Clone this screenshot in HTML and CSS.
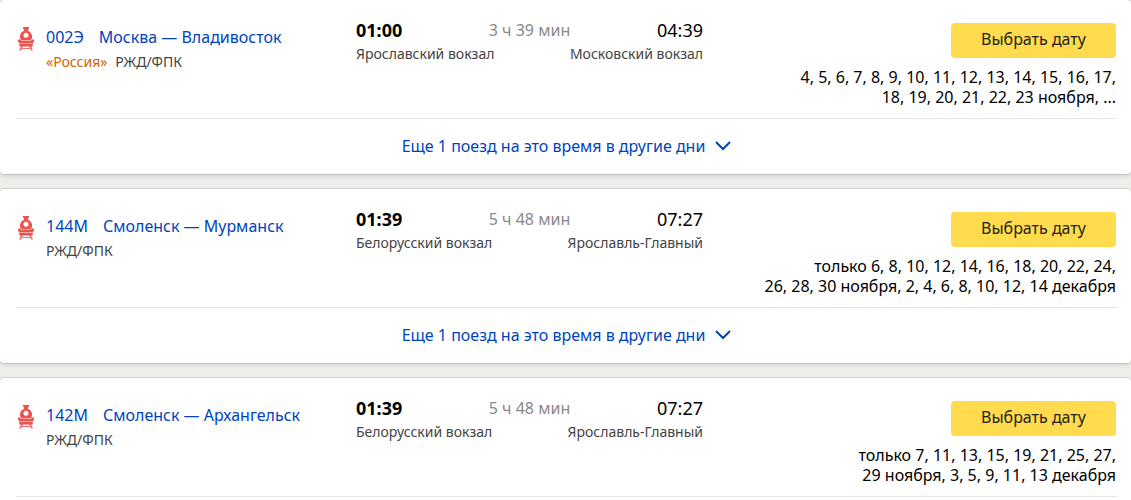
FILE: index.html
```
<!DOCTYPE html>
<html lang="ru">
<head>
	<meta charset="UTF-8">
	<meta name="viewport" content="width=device-width, initial-scale=1.0">
	<title>Расписание поездов</title>
	<link rel="stylesheet" href="styles.css">
</head>
<body>
	<svg class="sprite" width="0" height="0" aria-hidden="true">
		<symbol id="train" viewBox="0 0 16 24">
			<path d="M5 0h6v1.500l-1 1V5H6V2.500l-1-1z"/>
			<path fill-rule="evenodd" d="M8 3.500a6 6 0 0 1 4.500 10h-9A6 6 0 0 1 8 3.500zM8 5.800a2.500 2.500 0 1 0 0 5a2.500 2.500 0 0 0 0-5z"/>
			<path d="M0 12.500h2l1.500 1.500h9l1.500-1.500h2v2l-1 1.500H1l-1-1.500z"/>
			<path d="M1 16.500h14l-.5 3h-13z"/>
			<path d="M3 19h2.500L4 21h8l-1.500-2H13l2 4.500h-2L12.200 22H3.800L3 23.500H1z" opacity=".8"/>
		</symbol>
		<symbol id="arrow" viewBox="0 0 16 10">
			<path d="M1 1l7 7 7-7" fill="none" stroke="currentColor" stroke-width="2"/>
		</symbol>
	</svg>
	<main class="segments">
		<article class="segment">
			<div class="segment-main">
				<div class="train">
					<svg class="train-icon" aria-hidden="true"><use href="#train"/></svg>
					<div class="train-info">
						<a class="train-title" href="#"><span class="number">002Э</span>Москва — Владивосток</a>
						<div class="train-company"><span class="brand">«Россия»</span>РЖД/ФПК</div>
					</div>
				</div>
				<div class="route">
					<div class="point">
						<time class="time departure">01:00</time>
						<div class="station">Ярославский вокзал</div>
					</div>
					<div class="duration">3 ч 39 мин</div>
					<div class="point arrival">
						<time class="time">04:39</time>
						<div class="station">Московский вокзал</div>
					</div>
				</div>
				<div class="days">
					<button class="choose" type="button">Выбрать дату</button>
					<div class="dates">4, 5, 6, 7, 8, 9, 10, 11, 12, 13, 14, 15, 16, 17,<br>18, 19, 20, 21, 22, 23 ноября, ...</div>
				</div>
			</div>
			<button class="more" type="button">Еще 1 поезд на это время в другие дни <svg class="arrow" aria-hidden="true"><use href="#arrow"/></svg></button>
		</article>
		<article class="segment">
			<div class="segment-main">
				<div class="train">
					<svg class="train-icon" aria-hidden="true"><use href="#train"/></svg>
					<div class="train-info">
						<a class="train-title" href="#"><span class="number">144М</span>Смоленск — Мурманск</a>
						<div class="train-company">РЖД/ФПК</div>
					</div>
				</div>
				<div class="route">
					<div class="point">
						<time class="time departure">01:39</time>
						<div class="station">Белорусский вокзал</div>
					</div>
					<div class="duration">5 ч 48 мин</div>
					<div class="point arrival">
						<time class="time">07:27</time>
						<div class="station">Ярославль-Главный</div>
					</div>
				</div>
				<div class="days">
					<button class="choose" type="button">Выбрать дату</button>
					<div class="dates">только 6, 8, 10, 12, 14, 16, 18, 20, 22, 24,<br>26, 28, 30 ноября, 2, 4, 6, 8, 10, 12, 14 декабря</div>
				</div>
			</div>
			<button class="more" type="button">Еще 1 поезд на это время в другие дни <svg class="arrow" aria-hidden="true"><use href="#arrow"/></svg></button>
		</article>
		<article class="segment">
			<div class="segment-main">
				<div class="train">
					<svg class="train-icon" aria-hidden="true"><use href="#train"/></svg>
					<div class="train-info">
						<a class="train-title" href="#"><span class="number">142М</span>Смоленск — Архангельск</a>
						<div class="train-company">РЖД/ФПК</div>
					</div>
				</div>
				<div class="route">
					<div class="point">
						<time class="time departure">01:39</time>
						<div class="station">Белорусский вокзал</div>
					</div>
					<div class="duration">5 ч 48 мин</div>
					<div class="point arrival">
						<time class="time">07:27</time>
						<div class="station">Ярославль-Главный</div>
					</div>
				</div>
				<div class="days">
					<button class="choose" type="button">Выбрать дату</button>
					<div class="dates">только 7, 11, 13, 15, 19, 21, 25, 27,<br>29 ноября, 3, 5, 9, 11, 13 декабря</div>
				</div>
			</div>
		</article>
	</main>
</body>
</html>
```

FILE: styles.css
```
* {
	box-sizing: border-box;
}
body {
	margin: 0;
	background: #efeeeb;
	color: #000;
	font: 16px/20px "Noto Sans", sans-serif;
}
button {
	border: 0;
	font: inherit;
	cursor: pointer;
}
.sprite {
	display: block;
}
.segments {
	display: grid;
	gap: 15px;
}
.segment {
	padding: 0 14px 0 16px;
	background: #fff;
	border-radius: 4px;
	box-shadow: 0 0 0 1px rgba(0,0,0,0.1), 0 2px 5px rgba(0,0,0,0.12);
}
.segment:last-child {
	padding-bottom: 3px;
	border-radius: 4px 4px 0 0;
}
.segment-main {
	display: grid;
	grid-template-columns: 340fr 347fr 414fr;
	min-height: 119px;
	padding-bottom: 11px;
	border-bottom: 1px solid #e5e5e5;
}
.train {
	display: flex;
	gap: 10px;
	padding-top: 27px;
}
.train-icon {
	flex: none;
	width: 20px;
	height: 24px;
	fill: #ef5350;
}
.train-title {
	color: #04b;
	text-decoration: none;
}
.number {
	margin-right: 15px;
}
.train-company {
	margin-top: 5px;
	color: #444;
	font-size: 14px;
}
.brand {
	margin-right: 8px;
	color: #c60;
}
.route {
	display: flex;
	justify-content: space-between;
	min-width: 0;
	padding-top: 20px;
}
.point {
	flex: 1 1 0;
	min-width: 0;
	white-space: nowrap;
}
.arrival {
	display: flex;
	flex-direction: column;
	align-items: flex-end;
}
.time {
	display: block;
	font-size: 18px;
}
.departure {
	font-weight: bold;
}
.station {
	margin-top: 4px;
	color: #444;
	font-size: 14px;
}
.duration {
	color: #888;
	white-space: nowrap;
}
.days {
	padding: 23px 1px 0 0;
	text-align: right;
}
.choose {
	width: 165px;
	height: 35px;
	padding-bottom: 4px;
	border-radius: 4px;
	background: #ffdb4d;
	color: #222;
}
.dates {
	margin-top: 9px;
}
.more {
	display: flex;
	align-items: center;
	justify-content: center;
	gap: 10px;
	width: 100%;
	height: 55px;
	padding: 0 0 2px;
	background: none;
	color: #04b;
}
.arrow {
	width: 16px;
	height: 10px;
}
```
